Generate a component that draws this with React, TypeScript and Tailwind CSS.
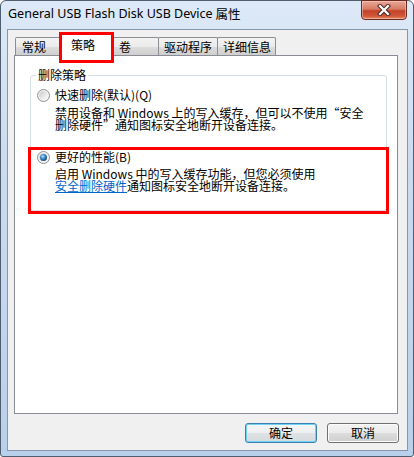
import React from 'react';

const cjk = { fontFamily: '"Noto Sans CJK SC", "Noto Sans", sans-serif' };
const latin = { fontFamily: '"Noto Sans", "Liberation Sans", "Noto Sans CJK SC", sans-serif' };

const Radio: React.FC<{ checked?: boolean }> = ({ checked }) => (
  <svg width="13" height="13" viewBox="0 0 13 13" className="shrink-0">
    <defs>
      <linearGradient id={checked ? 'rbg1' : 'rbg0'} x1="0" y1="0" x2="1" y2="1">
        <stop offset="0" stopColor="#c9c9c9" />
        <stop offset="1" stopColor="#ffffff" />
      </linearGradient>
      <radialGradient id="dot" cx="0.4" cy="0.35" r="0.7">
        <stop offset="0" stopColor="#b6e4ff" />
        <stop offset="0.45" stopColor="#3d8fd0" />
        <stop offset="1" stopColor="#13406f" />
      </radialGradient>
    </defs>
    <circle cx="6.5" cy="6.5" r="6" fill="#f4f4f4" stroke="#8e8f8f" strokeWidth="1" />
    <circle cx="6.5" cy="6.5" r="4.5" fill={`url(#${checked ? 'rbg1' : 'rbg0'})`} />
    {checked && <circle cx="6.5" cy="6.5" r="3.5" fill="url(#dot)" />}
  </svg>
);

const tabBg = 'border border-b-0 border-[#8c8e94] bg-[linear-gradient(180deg,#f3f3f3_0%,#ebebeb_50%,#dddddd_51%,#cfcfcf_100%)] rounded-t-[2px]';

const App: React.FC = () => {
  return (
    <div className="w-[414px] h-[457px] bg-white">
      <div className="relative w-[414px] h-[457px] border border-[#4f5d6e] rounded-t-[6px] rounded-b-[3px] bg-[linear-gradient(180deg,#dde9f7_0%,#cbdcf0_35%,#b9d0ea_100%)] flex flex-col pl-[6px] pr-[5px] pb-[5px]">
        {/* title bar */}
        <div className="h-[28px] flex items-center pl-[1px] text-[12.5px] text-black pb-[1px]" style={latin}>
          General USB Flash Disk USB Device <span style={cjk} className="ml-[3px]">属性</span>
        </div>

        {/* close button */}
        <div className="absolute top-[-1px] right-[6px] w-[46px] h-[20px] rounded-b-[4px] border border-[#6b2a1f] bg-[linear-gradient(180deg,#e9a897_0%,#d77b63_45%,#c2412a_55%,#d2593a_85%,#e6906c_100%)] flex items-center justify-center shadow-[inset_0_0_0_1px_rgba(255,220,210,0.45)]">
          <svg width="14" height="12" viewBox="0 0 14 12">
            <path d="M3 2 L11 10 M11 2 L3 10" stroke="#4a2a26" strokeWidth="4.2" strokeLinecap="square" />
            <path d="M3 2 L11 10 M11 2 L3 10" stroke="#ffffff" strokeWidth="2.2" strokeLinecap="square" />
          </svg>
        </div>

        {/* client area */}
        <div className="flex-1 border border-[#8797ab] bg-[#f0f0f0] flex flex-col">
          {/* tabs */}
          <div className="flex items-end mt-[4px] ml-[7px] h-[21px] relative z-10 text-[12px] text-black" style={cjk}>
            <div className={`w-[46px] h-[18px] pl-[6px] leading-[17px] ${tabBg}`}>常规</div>
            <div className="w-[54px] h-[22px] -ml-[2px] mb-[-1px] border border-b-0 border-[#8c8e94] bg-white pl-[11px] leading-[19px] relative z-10 rounded-t-[2px]">策略</div>
            <div className={`w-[48px] h-[18px] -ml-[2px] pl-[7px] leading-[17px] ${tabBg}`}>卷</div>
            <div className={`w-[60px] h-[18px] -ml-[1px] pl-[5px] leading-[17px] ${tabBg}`}>驱动程序</div>
            <div className={`w-[59px] h-[18px] -ml-[1px] pl-[5px] leading-[17px] ${tabBg}`}>详细信息</div>
          </div>

          {/* panel */}
          <div className="ml-[6px] w-[384px] h-[359px] border border-[#898c95] bg-white text-[12px] text-black" style={cjk}>
            <fieldset className="mt-[11px] ml-[15px] w-[357px] border border-[#d5dfe5] rounded-[3px] pb-[18px]">
              <legend className="ml-[5px] px-[2px] leading-[16px]">删除策略</legend>
              <div className="mt-[4px] pl-[6px] flex items-center gap-[5px] h-[16px] leading-[16px]">
                <Radio />
                <span>快速删除(默认)(Q)</span>
              </div>
              <div className="mt-[4px] pl-[24px] leading-[12px] whitespace-nowrap flex flex-col">
                <span>禁用设备和 Windows 上的写入缓存，但可以不使用“安全</span>
                <span>删除硬件”通知图标安全地断开设备连接。</span>
              </div>
              <div className="mt-[18px] pl-[6px] flex items-center gap-[5px] h-[16px] leading-[16px]">
                <Radio checked />
                <span>更好的性能(B)</span>
              </div>
              <div className="mt-[3px] pl-[24px] leading-[12px] whitespace-nowrap flex flex-col">
                <span>启用 Windows 中的写入缓存功能，但您必须使用</span>
                <span><span className="text-[#0066cc] underline">安全删除硬件</span>通知图标安全地断开设备连接。</span>
              </div>
            </fieldset>
          </div>

          {/* buttons */}
          <div className="mt-[9px] mr-[8px] flex justify-end gap-[10px] text-[12px] text-black" style={cjk}>
            <button className="w-[72px] h-[20px] rounded-[3px] border border-[#3c7fb1] shadow-[inset_0_0_0_1px_#6fd3f7] bg-[linear-gradient(180deg,#f4f6f8_0%,#eceeef_50%,#dfe3e6_51%,#d4d9dc_100%)] leading-[18px]">确定</button>
            <button className="w-[72px] h-[20px] rounded-[3px] border border-[#707070] shadow-[inset_0_0_0_1px_#fcfcfc] bg-[linear-gradient(180deg,#f2f2f2_0%,#ebebeb_50%,#dddddd_51%,#cfcfcf_100%)] leading-[18px]">取消</button>
          </div>
        </div>

        {/* annotation boxes */}
        <div className="absolute left-[58px] top-[31px] w-[55px] h-[31px] border-[3px] border-[#ff0000] z-20 pointer-events-none" />
        <div className="absolute left-[27px] top-[146px] w-[361px] h-[67px] border-[3px] border-[#ff0000] z-20 pointer-events-none" />
      </div>
    </div>
  );
};

export default App;
